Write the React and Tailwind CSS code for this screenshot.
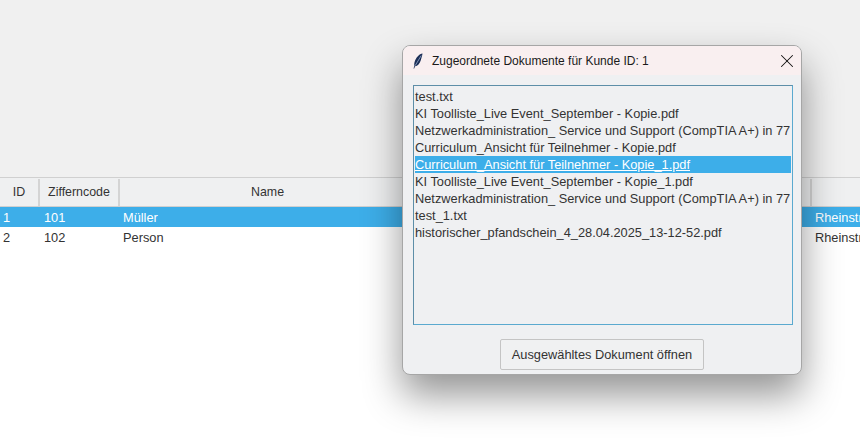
import React from "react";
import { X } from "lucide-react";

const docs = [
  "test.txt",
  "KI Toolliste_Live Event_September - Kopie.pdf",
  "Netzwerkadministration_ Service und Support (CompTIA A+) in 77",
  "Curriculum_Ansicht für Teilnehmer - Kopie.pdf",
  "Curriculum_Ansicht für Teilnehmer - Kopie_1.pdf",
  "KI Toolliste_Live Event_September - Kopie_1.pdf",
  "Netzwerkadministration_ Service und Support (CompTIA A+) in 77",
  "test_1.txt",
  "historischer_pfandschein_4_28.04.2025_13-12-52.pdf",
];

const Row = ({ id, code, name, street, selected }) => (
  <div
    className={`flex h-5 items-center pt-px text-[12.8px] ${
      selected ? "bg-[#3daee9] text-white" : "bg-white text-[#333]"
    }`}>
    <div className="w-10 shrink-0 pl-[3px]">{id}</div>
    <div className="w-20 shrink-0 pl-1">{code}</div>
    <div className="w-[692px] shrink-0 pl-[3px]">{name}</div>
    <div className="pl-[3px] whitespace-nowrap">{street}</div>
  </div>
);

const App = () => {
  return (
    <div className="relative h-[446px] w-[860px] overflow-hidden bg-white font-['Liberation_Sans',sans-serif]">
      <div className="h-[177px] bg-[#f0f0f0]"></div>
      <div className="flex h-[30px] border-y border-[#d0d0d0] bg-[#eff0f1] pt-px text-[12.4px] text-[#333]">
        <div className="flex w-10 shrink-0 items-center justify-center border-r-2 border-[#d4d4d4]">ID</div>
        <div className="flex w-20 shrink-0 items-center justify-center border-r-2 border-[#d4d4d4]">Zifferncode</div>
        <div className="flex w-[295px] shrink-0 items-center justify-center">Name</div>
        <div className="w-[397px] shrink-0 border-r-2 border-[#d4d4d4]"></div>
        <div className="flex-1"></div>
      </div>
      <Row id="1" code="101" name="Müller" street="Rheinstr" selected />
      <Row id="2" code="102" name="Person" street="Rheinstr" />

      <div className="absolute left-[402px] top-[45px] flex h-[330px] w-[400px] flex-col overflow-hidden rounded-lg border border-[#a6a6a6] bg-[#eff0f2] shadow-[0_20px_38px_rgba(0,0,0,0.42)]">
        <div className="flex h-[29px] items-center bg-[#f9eff0] pl-[9px] pr-[3px]">
          <svg viewBox="0 0 12 16" className="h-4 w-3">
            <path d="M10.5 .6C7.5 1 4 4.4 2.6 9c-.4 1.5-.5 2.8-.2 3.7L1.5 15.4l.7.2.9-2.4c2.6-.2 4.6-2.8 5.8-6.3.7-2.2 1.5-4.7 1.6-6.3z" fill="#1c2f57" />
            <path d="M9.2 2.6 3.2 12.6" stroke="#a9bcdc" strokeWidth="0.7" />
          </svg>
          <span className="ml-[8px] flex-1 text-[12px] text-[#1a1a1a]">Zugeordnete Dokumente für Kunde ID: 1</span>
          <X size={22} strokeWidth={1.1} className="text-[#111]" />
        </div>
        <div className="flex flex-1 flex-col pl-[10px] pt-[10px]">
          <div className="h-[240px] w-[380px] overflow-hidden border border-[#5aa9cf] border-t-[#5d8ea8] border-l-[#5d8ea8] pt-[2px] pl-px pr-px text-[12.8px] leading-[17px] text-[#333]">
            {docs.map((d, i) => (
              <div
                key={d + i}
                className={`h-[17px] whitespace-nowrap ${
                  i === 4 ? "bg-[#3daee9] text-white underline" : ""
                }`}>
                {d}
              </div>
            ))}
          </div>
          <div className="flex justify-center pr-[10px] pt-[14px]">
            <button className="h-[31px] w-[204px] rounded-[2px] border border-[#c4c4c4] bg-[#f0f1f2] text-[12.8px] text-[#333]">
              Ausgewähltes Dokument öffnen
            </button>
          </div>
        </div>
      </div>
    </div>
  );
};

export default App;
